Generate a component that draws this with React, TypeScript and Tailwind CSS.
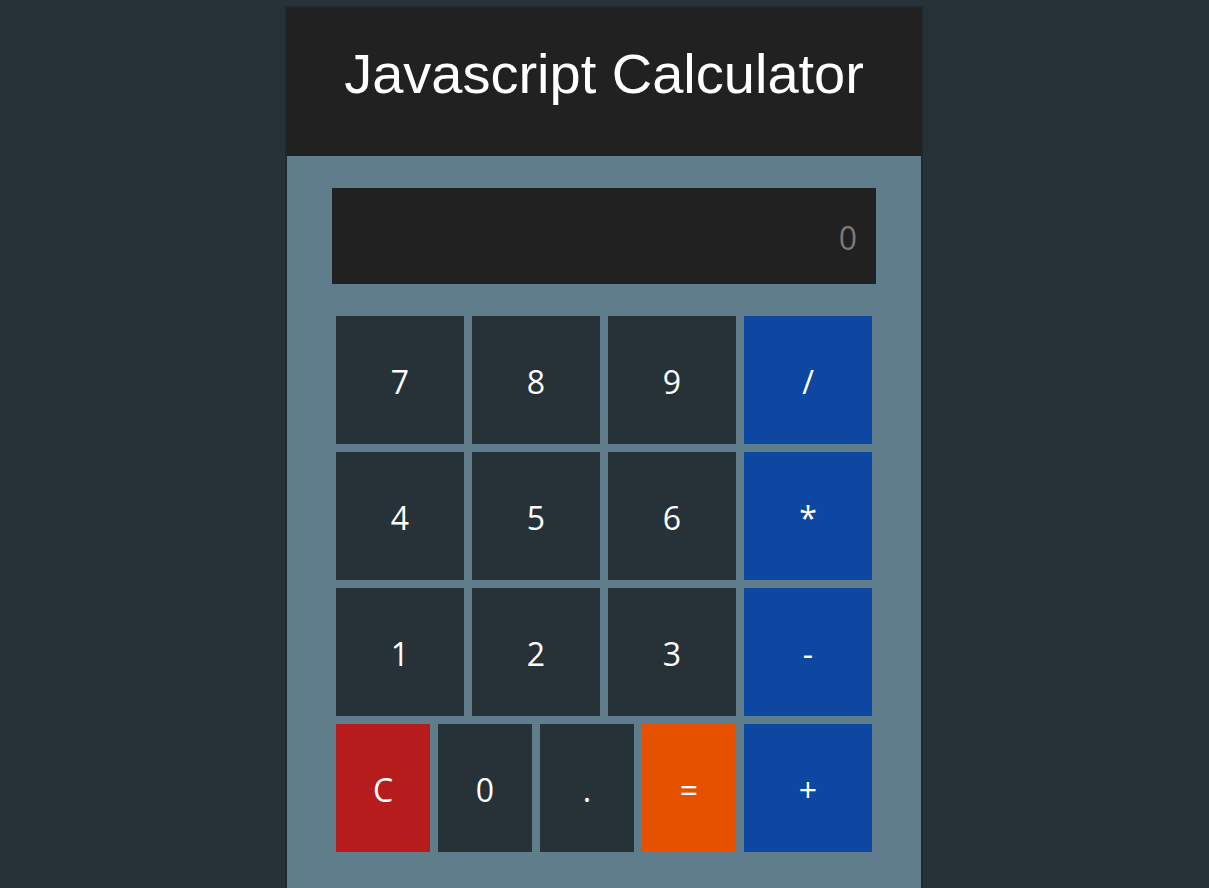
import React, { useState } from 'react';

type Key = {
  label: string;
  color: string;
};

const numBtn = 'bg-[#263238]';
const opBtn = 'bg-[#0d47a1]';

const rows: Key[][] = [
  [
    { label: '7', color: numBtn },
    { label: '8', color: numBtn },
    { label: '9', color: numBtn },
    { label: '/', color: opBtn },
  ],
  [
    { label: '4', color: numBtn },
    { label: '5', color: numBtn },
    { label: '6', color: numBtn },
    { label: '*', color: opBtn },
  ],
  [
    { label: '1', color: numBtn },
    { label: '2', color: numBtn },
    { label: '3', color: numBtn },
    { label: '-', color: opBtn },
  ],
];

const lastRow: Key[] = [
  { label: 'C', color: 'bg-[#b71c1c]' },
  { label: '0', color: numBtn },
  { label: '.', color: numBtn },
  { label: '=', color: 'bg-[#e65100]' },
];

const CalcButton = ({ k, onPress }: { k: Key; onPress: (label: string) => void }) => (
  <div className="p-1">
    <button
      onClick={() => onPress(k.label)}
      className={`flex h-32 w-full items-center justify-center pt-[4px] text-[32px] text-white ${k.color}`}
    >
      {k.label}
    </button>
  </div>
);

export default function App() {
  const [display, setDisplay] = useState('0');

  const press = (label: string) => {
    if (label === 'C') {
      setDisplay('0');
      return;
    }
    if (label === '=') {
      try {
        // eslint-disable-next-line no-new-func
        const result = Function(`return (${display})`)();
        setDisplay(String(result));
      } catch {
        setDisplay('Error');
      }
      return;
    }
    setDisplay((prev) => (prev === '0' && label !== '.' ? label : prev + label));
  };

  const font = { fontFamily: '"Open Sans", "Noto Sans", sans-serif' };

  return (
    <div className="min-h-screen bg-[#263238] pt-[6px] overflow-hidden">
      <div className="ml-[285px] w-[638px] border-2 border-b-0 border-[#1f282d]">
        <div className="h-[148px] bg-[#212121] pt-[38px]">
          <h1
            className="text-center text-[56px] leading-[56px] text-white"
            style={{ fontFamily: '"Liberation Sans", Arial, sans-serif' }}
          >
            Javascript Calculator
          </h1>
        </div>

        <div className="bg-[#607d8b] px-[45px] pt-8 pb-10" style={font}>
          <div className="flex h-24 items-center justify-end bg-[#212121] pt-[4px] pr-[19px] text-[32px] text-[#7a7a70]">
            {display}
          </div>

          <div className="mt-7">
            {rows.map((row, i) => (
              <div key={i} className="grid grid-cols-4">
                {row.map((k) => (
                  <CalcButton key={k.label} k={k} onPress={press} />
                ))}
              </div>
            ))}

            <div className="grid grid-cols-4">
              <div className="col-span-3 grid grid-cols-4">
                {lastRow.map((k) => (
                  <CalcButton key={k.label} k={k} onPress={press} />
                ))}
              </div>
              <CalcButton k={{ label: '+', color: opBtn }} onPress={press} />
            </div>
          </div>
        </div>
      </div>
    </div>
  );
}
